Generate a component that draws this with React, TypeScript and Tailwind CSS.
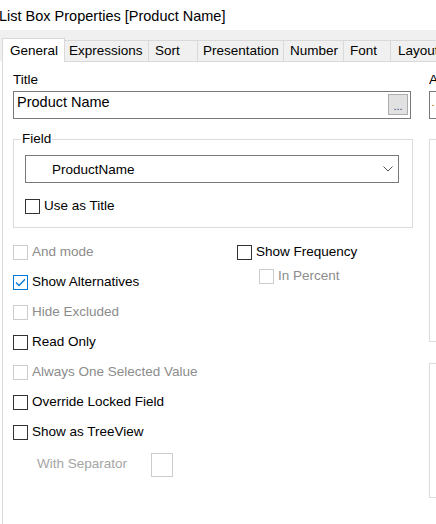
import React from 'react';

type CheckState = 'on' | 'off' | 'disabled';

interface Tab {
  name: string;
  width: string;
  pad: string;
}

const TABS: Tab[] = [
  { name: 'Expressions', width: 'w-[84px]', pad: 'pl-[4px]' },
  { name: 'Sort', width: 'w-[49px]', pad: 'pl-[6px]' },
  { name: 'Presentation', width: 'w-[86px]', pad: 'pl-[5px]' },
  { name: 'Number', width: 'w-[60px]', pad: 'pl-[6px]' },
  { name: 'Font', width: 'w-[47px]', pad: 'pl-[6px]' },
  { name: 'Layout', width: 'w-[60px]', pad: 'pl-[7px]' },
];

const Check: React.FC<{ state: CheckState; label: string }> = ({ state, label }) => {
  const box =
    state === 'on'
      ? 'border-[#0078d7]'
      : state === 'disabled'
        ? 'border-[#cccccc]'
        : 'border-[#333333]';
  return (
    <div className="flex items-center gap-[4px]">
      <span className={`w-[15px] h-[15px] border ${box} bg-white flex items-center justify-center shrink-0`}>
        {state === 'on' && (
          <svg width="11" height="9" viewBox="0 0 11 9">
            <path d="M1 4.5 L4 7.5 L10 1.2" fill="none" stroke="#0078d7" strokeWidth="1.3" />
          </svg>
        )}
      </span>
      <span className={state === 'disabled' ? 'text-[#8c8c8c]' : 'text-black'}>{label}</span>
    </div>
  );
};

const Row: React.FC<{ state: CheckState; label: string }> = ({ state, label }) => (
  <div className="h-[30px] flex items-center">
    <Check state={state} label={label} />
  </div>
);

const App: React.FC = () => {
  return (
    <div className="w-[436px] h-[524px] overflow-hidden bg-white text-[13.5px] leading-[16px] text-black font-['Liberation_Sans',Arial,sans-serif]">
      {/* window caption */}
      <div className="h-[30px] flex items-center pt-px -ml-px text-[14.5px] whitespace-nowrap">
        List Box Properties [Product Name]
      </div>

      {/* tab strip */}
      <div className="bg-[#f0f0f0] pt-[8px] pl-[2px]">
        <div className="h-[23px] flex items-end whitespace-nowrap">
          <div className="relative z-10 -mb-px h-[24px] w-[63px] shrink-0 bg-white border border-b-0 border-[#d9d9d9] pl-[7px] pt-[4px]">
            General
          </div>
          {TABS.map(t => (
            <div
              key={t.name}
              className={`h-[21px] ${t.width} ${t.pad} shrink-0 flex items-center border-t border-r border-[#d9d9d9] bg-[#f0f0f0]`}
            >
              {t.name}
            </div>
          ))}
        </div>
      </div>

      {/* General page */}
      <div className="ml-[2px] h-[464px] bg-white border-l border-t border-[#d9d9d9] pl-[10px] flex">
        <div className="w-[416px] shrink-0">
          <div className="mt-[10px]">Title</div>
          <div className="mt-[3px] w-[398px] h-[28px] border border-[#7a7a7a] flex items-start justify-between">
            <span className="pl-[3px] pt-[1px] text-[14.5px] leading-[18px]">Product Name</span>
            <span className="mt-[2px] mr-[2px] w-[20px] h-[21px] bg-[#e1e1e1] border border-[#adadad] flex items-end justify-center pb-[2px] text-[11px] leading-[11px] text-[#1c3d6e]">
              ...
            </span>
          </div>

          <div className="relative mt-[20px] w-[400px] border border-[#dcdcdc] pl-[11px] pt-[15px] pb-[6px]">
            <span className="absolute -top-[9px] left-[7px] bg-white px-[1px]">Field</span>
            <div className="w-[374px] h-[28px] border border-[#7a7a7a] flex items-center justify-between pl-[26px] pr-[5px]">
              <span className="pt-px">ProductName</span>
              <svg width="10" height="6" viewBox="0 0 10 6">
                <path d="M0.5 0.5 L5 5 L9.5 0.5" fill="none" stroke="#505050" strokeWidth="1" />
              </svg>
            </div>
            <div className="mt-[8px] h-[30px] flex items-center">
              <Check state="off" label="Use as Title" />
            </div>
          </div>

          <div className="mt-[9px] flex">
            <div className="w-[224px] shrink-0">
              <Row state="disabled" label="And mode" />
              <Row state="on" label="Show Alternatives" />
              <Row state="disabled" label="Hide Excluded" />
              <Row state="off" label="Read Only" />
              <Row state="disabled" label="Always One Selected Value" />
              <Row state="off" label="Override Locked Field" />
              <Row state="off" label="Show as TreeView" />
            </div>
            <div>
              <Row state="off" label="Show Frequency" />
              <div className="h-[18px] pl-[22px] flex items-center">
                <Check state="disabled" label="In Percent" />
              </div>
            </div>
          </div>

          <div className="mt-[6px] h-[24px] pl-[24px] flex items-center gap-[24px]">
            <span className="pb-[2px] text-[#a5a5a5]">With Separator</span>
            <span className="w-[22px] h-[24px] border border-[#cccccc]" />
          </div>
        </div>

        {/* second column, clipped by the window edge */}
        <div className="flex-1 overflow-hidden">
          <div className="mt-[10px]">A</div>
          <div className="mt-[3px] h-[28px] w-[120px] border border-[#7a7a7a] flex items-center pl-[2px]">
            <span className="w-[2px] h-px bg-[#e08a3c]" />
          </div>
          <div className="mt-[20px] h-[203px] w-[120px] border border-[#dcdcdc]" />
          <div className="mt-[21px] h-[135px] w-[120px] border border-[#dcdcdc]" />
        </div>
      </div>
    </div>
  );
};

export default App;
